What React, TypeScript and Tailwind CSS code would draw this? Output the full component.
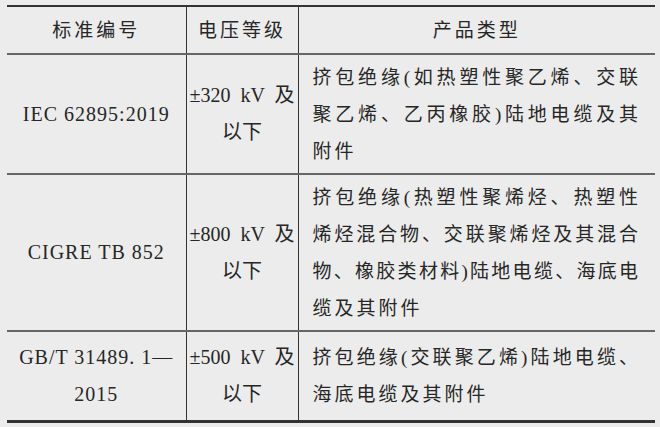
const serif = "font-['Liberation_Serif','Noto_Sans_CJK_SC',serif]";

type Row = {
  standard: string[];
  voltage: string[];
  product: string[];
  height: string;
};

const rows: Row[] = [
  {
    standard: ["IEC 62895:2019"],
    voltage: ["±320 kV 及", "以下"],
    product: ["挤包绝缘(如热塑性聚乙烯、交联", "聚乙烯、乙丙橡胶)陆地电缆及其", "附件"],
    height: "h-[120px]",
  },
  {
    standard: ["CIGRE TB 852"],
    voltage: ["±800 kV 及", "以下"],
    product: [
      "挤包绝缘(热塑性聚烯烃、热塑性",
      "烯烃混合物、交联聚烯烃及其混合",
      "物、橡胶类材料)陆地电缆、海底电",
      "缆及其附件",
    ],
    height: "h-[157px]",
  },
  {
    standard: ["GB/T 31489. 1—", "2015"],
    voltage: ["±500 kV 及", "以下"],
    product: ["挤包绝缘(交联聚乙烯)陆地电缆、", "海底电缆及其附件"],
    height: "h-[90px]",
  },
];

function Lines({ lines, justify, lastClass = "" }: { lines: string[]; justify?: boolean; lastClass?: string }) {
  return (
    <>
      {lines.map((line, i) => (
        <div
          key={i}
          className={
            justify && i < lines.length - 1
              ? "[text-align-last:justify] text-justify"
              : lastClass
          }
        >
          {line}
        </div>
      ))}
    </>
  );
}

export default function App() {
  return (
    <main className={`w-[660px] h-[427px] bg-[#ececec] pt-[5px] pl-[7px] text-[#262626] ${serif}`}>
      <table className="w-[648px] border-collapse table-fixed text-[19px] leading-[37px]">
        <colgroup>
          <col className="w-[179px]" />
          <col className="w-[112px]" />
          <col className="w-[357px]" />
        </colgroup>
        <thead>
          <tr className="h-[48px] border-t-[2px] border-b-[2px] border-t-[#333] border-b-[#666]">
            <th className="font-normal text-center tracking-[3px] border-r border-[#333] align-middle">标准编号</th>
            <th className="font-normal text-center tracking-[3px] border-r border-[#333] align-middle">电压等级</th>
            <th className="font-normal text-center tracking-[3px] align-middle">产品类型</th>
          </tr>
        </thead>
        <tbody>
          {rows.map((row, i) => (
            <tr
              key={i}
              className={`${row.height} ${
                i === rows.length - 1 ? "border-b-[3px] border-b-[#333]" : "border-b-[2px] border-b-[#666]"
              }`}
            >
              <td className="text-center align-middle border-r border-[#333] tracking-[1px] text-[20px]">
                <Lines lines={row.standard} />
              </td>
              <td className="text-center align-middle border-r border-[#333] px-[3px] text-[20px]">
                <Lines lines={row.voltage} justify />
              </td>
              <td className="align-middle pl-[14px] pr-[17px]">
                <Lines lines={row.product} justify lastClass="tracking-[3px]" />
              </td>
            </tr>
          ))}
        </tbody>
      </table>
    </main>
  );
}
